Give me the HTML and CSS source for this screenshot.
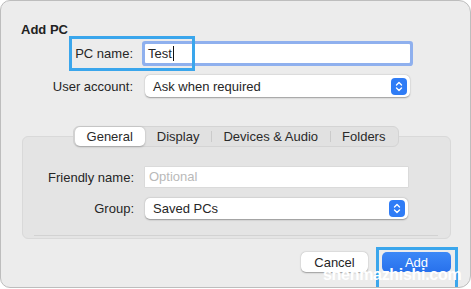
FILE: index.html
```html
<!DOCTYPE html>
<html lang="en">
<head>
    <meta charset="UTF-8">
    <title>Add PC</title>
    <link rel="stylesheet" href="styles.css">
</head>
<body>
    <div class="window">
        <h1 class="title">Add PC</h1>
        <div class="form">
            <label class="label">PC name:</label>
            <div class="field field-focus">Test<span class="caret"></span></div>
            <label class="label">User account:</label>
            <div class="select">
                <span>Ask when required</span>
                <span class="stepper">
                    <svg width="16" height="17" viewBox="0 0 16 17"><path d="M5.5 7 L8 4.5 L10.5 7 M5.5 10 L8 12.5 L10.5 10" fill="none" stroke="#fff" stroke-width="1.4" stroke-linecap="round" stroke-linejoin="round"/></svg>
                </span>
            </div>
        </div>

        <div class="tabs">
            <div class="segmented">
                <span class="seg seg-active">General</span>
                <span class="seg">Display</span>
                <span class="seg seg-line">Devices &amp; Audio</span>
                <span class="seg seg-line">Folders</span>
            </div>
            <div class="tab-box">
                <div class="form form-inner">
                    <label class="label">Friendly name:</label>
                    <div class="field field-plain"><span class="placeholder">Optional</span></div>
                    <label class="label">Group:</label>
                    <div class="select select-inner">
                        <span>Saved PCs</span>
                        <span class="stepper">
                            <svg width="16" height="17" viewBox="0 0 16 17"><path d="M5.5 7 L8 4.5 L10.5 7 M5.5 10 L8 12.5 L10.5 10" fill="none" stroke="#fff" stroke-width="1.4" stroke-linecap="round" stroke-linejoin="round"/></svg>
                        </span>
                    </div>
                </div>
                <div class="tab-rule"></div>
            </div>
        </div>

        <div class="actions">
            <button class="btn btn-cancel">Cancel</button>
            <button class="btn btn-add">Add</button>
        </div>

        <div class="mark mark-name"></div>
        <div class="mark mark-add"></div>
        <div class="watermark">shenmazhishi.com</div>
    </div>
</body>
</html>
```

FILE: styles.css
```css
body {
    margin: 0;
    background-color: #fff;
    font-family: "Liberation Sans", Arial, sans-serif;
    font-size: 13px;
    color: #262626;
}
.window {
    position: relative;
    box-sizing: border-box;
    width: 471px;
    height: 288px;
    padding: 0 19px 0 20px;
    background-color: #ececec;
    border: 1px solid #bdbdbd;
    border-radius: 10px 12px 12px 10px;
    overflow: hidden;
}
.title {
    margin: 21px 0 0 0;
    font-size: 13px;
    line-height: 16px;
    font-weight: bold;
    color: #222;
}

/* label / field grid */
.form {
    display: grid;
    grid-template-columns: 112px 265px;
    column-gap: 12px;
    row-gap: 12px;
    align-items: center;
    margin-top: 6px;
}
.label {
    text-align: right;
    white-space: nowrap;
}
.field {
    box-sizing: border-box;
    height: 19px;
    padding-left: 3px;
    line-height: 19px;
    background-color: #fff;
}
.field-focus {
    box-shadow: 0 0 0 3px #8fb0ee;
    border-radius: 1px;
}
.caret {
    display: inline-block;
    width: 1px;
    height: 15px;
    margin-left: 1px;
    vertical-align: -3px;
    background-color: #111;
}
.select {
    display: flex;
    align-items: center;
    justify-content: space-between;
    box-sizing: border-box;
    height: 22px;
    padding: 0 3px 0 8px;
    background-color: #fff;
    border-radius: 5px;
    box-shadow: 0 0.5px 1.5px rgba(0,0,0,0.35);
}
.stepper {
    display: flex;
    width: 16px;
    height: 17px;
    background-color: #2f7cf6;
    border-radius: 4px;
}

/* tabs */
.tabs {
    margin-top: 29px;
    display: flex;
    flex-direction: column;
    align-items: center;
}
.segmented {
    position: relative;
    z-index: 1;
    display: flex;
    box-sizing: border-box;
    height: 21px;
    padding: 0 1px;
    align-items: center;
    background-color: #e1e1e1;
    border: 1px solid #d4d4d4;
    border-radius: 6px;
}
.seg {
    position: relative;
    padding: 0 12px;
    line-height: 19px;
    color: #2a2a2a;
}
.seg-line::before {
    content: "";
    position: absolute;
    left: 0;
    top: 4px;
    height: 11px;
    width: 1px;
    background-color: #cbcbcb;
}
.seg-active {
    background-color: #fff;
    border-radius: 5px;
    box-shadow: 0 0.5px 2px rgba(0,0,0,0.25);
}
.tab-box {
    align-self: stretch;
    margin: -11px 0 0 1px;
    padding: 30px 0 2px 0;
    background-color: #e4e4e4;
    border: 1px solid #d9d9d9;
    border-radius: 6px;
}
.form-inner {
    grid-template-columns: 111px 263px;
    column-gap: 11px;
    row-gap: 11px;
    margin-top: 0;
}
.field-plain {
    height: 20px;
    line-height: 20px;
    padding-left: 4px;
    box-shadow: 0 0 0 0.5px #cfcfcf;
}
.placeholder {
    color: #b9b9b9;
}
.select-inner {
    height: 21px;
}
.tab-rule {
    height: 1px;
    margin: 16px 12px 0 11px;
    background-color: #d2d2d2;
}

/* bottom buttons */
.actions {
    display: flex;
    justify-content: flex-end;
    gap: 14px;
    margin-top: 13px;
}
.btn {
    height: 20px;
    padding: 0;
    border: none;
    border-radius: 5px;
    font-family: inherit;
    font-size: 13px;
}
.btn-cancel {
    width: 67px;
    background-color: #fff;
    color: #262626;
    box-shadow: 0 0.5px 1.5px rgba(0,0,0,0.35);
}
.btn-add {
    width: 69px;
    background: linear-gradient(#3c88f7, #2871ec);
    color: #fff;
}

/* annotation overlays */
.mark {
    position: absolute;
    box-sizing: border-box;
    border: 3px solid #3aa6ec;
}
.mark-name {
    left: 68px;
    top: 35px;
    width: 126px;
    height: 35px;
}
.mark-add {
    left: 375px;
    top: 246px;
    width: 82px;
    height: 50px;
}
.watermark {
    position: absolute;
    left: 322px;
    top: 265px;
    font-size: 16px;
    font-weight: bold;
    letter-spacing: -0.3px;
    color: #fff;
}
```
